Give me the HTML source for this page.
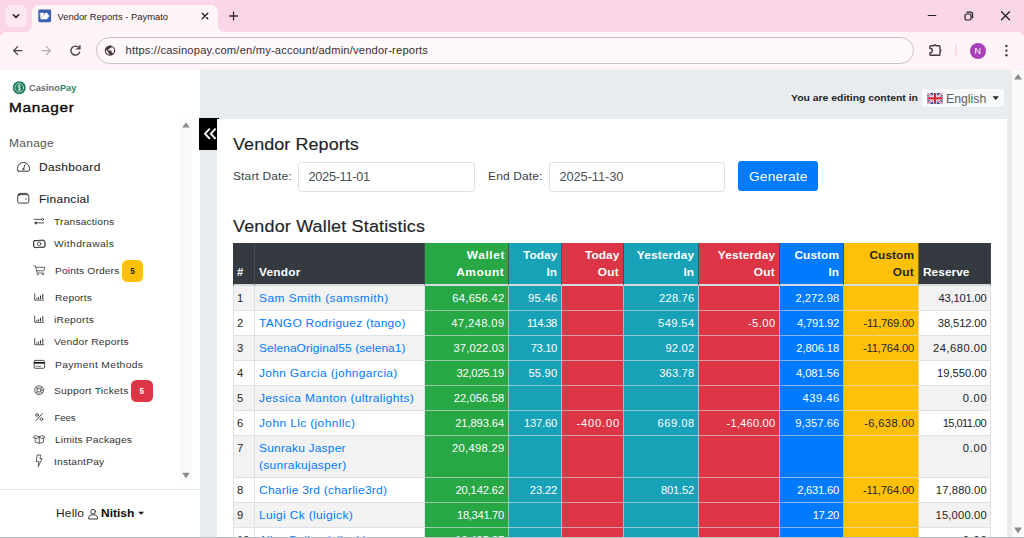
<!DOCTYPE html>
<html lang="en">
<head>
<meta charset="utf-8">
<title>Vendor Reports - Paymato</title>
<style>
*{box-sizing:border-box;margin:0;padding:0}
html,body{width:1024px;height:538px;overflow:hidden;background:#e9ecef;font-family:"Liberation Sans",sans-serif;color:#212529}
.t{position:absolute;white-space:nowrap;line-height:1}
/* browser chrome */
#chrome{position:absolute;left:0;top:0;width:1024px;height:70px;background:#fad7e8;z-index:5}
#tabstrip{position:absolute;left:0;top:0;width:1024px;height:32px;background:#fad7e8}
#toolbar{position:absolute;left:0;top:32px;width:1024px;height:38px;background:#fff5f7;border-radius:6px 6px 0 0;border-bottom:1px solid #fdeef2}
#tab{position:absolute;left:32px;top:5px;width:186px;height:28px;background:#fff5f7;border-radius:7px 7px 0 0}
#tabsearch{position:absolute;left:5px;top:5px;width:22px;height:22px;border-radius:6px;background:#fde7f0}
#tabtitle{position:absolute;left:57.5px;top:10.5px;font-size:9.4px;color:#2b2226;white-space:nowrap}
#omni{position:absolute;left:96px;top:37px;width:818px;height:26.5px;border-radius:13.5px;background:#fff8f9;border:1px solid #cdbfc4}
#url{position:absolute;left:125.5px;top:44px;font-size:11.2px;color:#3a2f33;white-space:nowrap;letter-spacing:.166px}
#avatar{position:absolute;left:969.7px;top:42.6px;width:16px;height:16px;border-radius:50%;background:#aa40b9;color:#fff;font-size:9px;line-height:16px;text-align:center}
/* page */
#page{position:absolute;left:0;top:0;width:1024px;height:538px;background:#e9ecef;overflow:hidden}
#sidebar{position:absolute;left:0;top:70px;width:200px;height:468px;background:#fff}
#sbtrack{position:absolute;left:179.6px;top:119px;width:12.2px;height:361.6px;background:#fafafa}
#sbsep{position:absolute;left:0;top:489px;width:200px;height:1px;background:#e3e3e3}
#toggle{position:absolute;left:199.2px;top:118px;width:19.6px;height:31.7px;background:#000}
#langbox{position:absolute;left:922px;top:89.2px;width:82.3px;height:17.9px;background:#f8f9fa;border-radius:3px}
#card{position:absolute;left:216.5px;top:119.2px;width:790.5px;height:430px;background:#fff}
.inp{position:absolute;top:161.5px;width:176.5px;height:30.3px;border:1px solid #dde1e6;border-radius:3.2px;background:#fff}
#genbtn{position:absolute;left:738px;top:161.4px;width:79.6px;height:29.9px;background:#007bff;border-radius:3.2px}
.badge{position:absolute;width:21.7px;height:22.4px;border-radius:5.5px}
#vscroll{position:absolute;left:1012px;top:70px;width:12px;height:468px;background:#fafafa}
#bottomline{position:absolute;left:0;top:537px;width:1024px;height:1px;background:#b9bcc0;z-index:6}
/* vendor table */
#vt{position:absolute;left:232.6px;top:242.7px;width:758.9px;border-collapse:separate;border-spacing:0;table-layout:fixed;font-size:11.2px;line-height:16.8px}
#vt th,#vt td{border:0 solid rgba(222,226,230,.6);border-right-width:1px;border-bottom-width:1px;padding:3.9px 3.8px 0 4.3px;vertical-align:top;text-align:right;white-space:nowrap;overflow:hidden;font-weight:400;color:#fff}
#vt th:first-child,#vt td:first-child{border-left-width:1px;padding-left:3.5px}
#vt th{height:43.2px;vertical-align:bottom;font-weight:700;padding:0 3.8px 2.9px 4.3px;border-bottom:2px solid #d4dce1;border-right-color:rgba(52,58,64,.6);border-left-color:#343a40}
#vt th:last-child{border-right-color:#343a40}
#vt tr{height:25px}
#vt .n,#vt .v{text-align:left;color:#212529}
#vt th.n,#vt th.v,#vt th.r{background:#343a40;color:#fff;border-right-color:#454d55}
#vt th.v,#vt th.r{text-align:left}
#vt td.v{white-space:normal}
#vt td.v a{color:#007bff}
#vt td.v span,#vt th span{display:inline-block;transform-origin:left center}
#vt th.c1 span,#vt th.c2 span,#vt th.c3 span,#vt th.c4 span,#vt th.c5 span{transform-origin:right center}
#vt .c1{background:#28a745}
#vt .c2{background:#17a2b8}
#vt .c3{background:#dc3545}
#vt .c4{background:#007bff}
#vt .c5{background:#ffc107;color:#212529}
#vt td.r{color:#212529}
#vt td.n,#vt td.v,#vt td.r{border-color:#dee2e6}
#vt tbody tr:nth-child(odd) td.n,#vt tbody tr:nth-child(odd) td.v,#vt tbody tr:nth-child(odd) td.r{background:#f2f2f2}
#vt tbody tr:first-child td{padding-top:4.3px}
</style>
</head>
<body>
<div id="chrome">
  <div id="tabstrip"></div>
  <div id="toolbar"></div>
  <div id="tabsearch"></div>
  <div id="tab"></div>
  <div id="tabtitle">Vendor Reports - Paymato</div>
  <div id="omni"></div>
  <div id="url">https://casinopay.com/en/my-account/admin/vendor-reports</div>
  <div id="avatar">N</div>
  <svg id="chromeicons" width="1024" height="70" viewBox="0 0 1024 70" style="position:absolute;left:0;top:0" fill="none" stroke-linecap="round" stroke-linejoin="round">
    <!-- tab outward curves -->
    <path d="M26 32 H32 V26 A6 6 0 0 1 26 32 Z" fill="#fff5f7" stroke="none"/>
    <path d="M224 32 H218 V26 A6 6 0 0 0 224 32 Z" fill="#fff5f7" stroke="none"/>
    <!-- tab search chevron -->
    <path d="M13.3 14.7 L16 17.4 L18.7 14.7" stroke="#1f1f1f" stroke-width="1.5"/>
    <!-- favicon -->
    <rect x="38.3" y="9.5" width="12.8" height="12.7" rx="1.4" fill="#3b5eb2" stroke="none"/>
    <path d="M40.5 13 H43.9 V14.9 L45.4 13 H46.9 L49.1 16 L46.9 19.1 H41 L40.4 17.2 Z" fill="#fff" stroke="#fff" stroke-width="0.5"/>
    <path d="M41.6 17.3 L44.6 14.6" stroke="#6f8bd0" stroke-width="0.6"/>
    <!-- tab close -->
    <path d="M202.2 13.2 L207.8 18.8 M207.8 13.2 L202.2 18.8" stroke="#1f1f1f" stroke-width="1.3"/>
    <!-- new tab plus -->
    <path d="M229.5 16 H237.5 M233.5 12 V20" stroke="#3a2c33" stroke-width="1.3"/>
    <!-- window controls -->
    <path d="M928.2 15.5 H935.8" stroke="#1f1f1f" stroke-width="1.2"/>
    <rect x="965" y="14" width="6" height="6" rx="1.4" stroke="#1f1f1f" stroke-width="1.2"/>
    <path d="M967 12.2 H970.6 A2 2 0 0 1 972.6 14.2 V17.8" stroke="#1f1f1f" stroke-width="1.2"/>
    <path d="M1001.5 11.8 L1009.5 19.8 M1009.5 11.8 L1001.5 19.8" stroke="#1f1f1f" stroke-width="1.3"/>
    <!-- back -->
    <path d="M21.9 50.6 H13.9 M17.6 46.6 L13.6 50.6 L17.6 54.6" stroke="#4a3a42" stroke-width="1.25"/>
    <!-- forward -->
    <path d="M42.1 50.6 H50.1 M46.4 46.6 L50.4 50.6 L46.4 54.6" stroke="#b5a9ae" stroke-width="1.25"/>
    <!-- reload -->
    <path d="M79.2 48.2 A4.5 4.5 0 1 0 79.6 52.2" stroke="#4a3a42" stroke-width="1.4"/>
    <path d="M79.9 45.6 V48.9 H76.6" stroke="#4a3a42" stroke-width="1.4"/>
    <!-- globe -->
    <path transform="translate(103.76 44.36) scale(0.52)" d="M12 2C6.48 2 2 6.48 2 12s4.48 10 10 10 10-4.48 10-10S17.52 2 12 2zm-1 17.93c-3.95-.49-7-3.85-7-7.93 0-.62.08-1.21.21-1.79L9 15v1c0 1.100.9 2 2 2v1.930zm6.900-2.540c-.26-.81-1-1.390-1.900-1.390h-1v-3c0-.55-.45-1-1-1H8v-2h2c.55 0 1-.45 1-1V7h2c1.100 0 2-.9 2-2v-.41c2.930 1.190 5 4.060 5 7.410 0 2.080-.8 3.970-2.100 5.390z" fill="#43343b" stroke="none"/>
    <!-- extensions puzzle -->
    <path d="M930.7 45.7 H934 A0.95 0.95 0 0 1 935.9 45.7 H939.1 A0.8 0.8 0 0 1 939.9 46.5 V49.6 A0.95 0.95 0 0 1 939.9 51.5 V54.4 A0.8 0.8 0 0 1 939.1 55.2 H930.7 A0.8 0.8 0 0 1 929.9 54.4 V53 A2.4 2.4 0 0 0 929.9 48.2 V46.5 A0.8 0.8 0 0 1 930.7 45.7 Z" stroke="#4a3540" stroke-width="1.4"/>
    <!-- separator -->
    <path d="M955.9 44.8 V56.2" stroke="#fbd0e4" stroke-width="1.5" stroke-linecap="butt"/>
    <!-- menu dots -->
    <circle cx="1006.4" cy="46" r="1.2" fill="#4a3540" stroke="none"/>
    <circle cx="1006.4" cy="50.6" r="1.2" fill="#4a3540" stroke="none"/>
    <circle cx="1006.4" cy="55.2" r="1.2" fill="#4a3540" stroke="none"/>
  </svg>
</div>

<div id="page">
  <div id="sidebar"></div>
  <div id="sbtrack"></div>
  <div id="sbsep"></div>
  <div id="toggle"></div>
  <div id="langbox"></div>
  <div id="card"></div>
  <div class="inp" style="left:298.3px"></div>
  <div class="inp" style="left:548.9px"></div>
  <div id="genbtn"></div>
  <div class="badge" style="left:121.5px;top:259.8px;background:#ffc107"></div>
  <div class="badge" style="left:131px;top:380.1px;background:#dc3545"></div>
  <table id="vt">
    <colgroup><col style="width:22.4px"><col style="width:170px"><col style="width:84px"><col style="width:53px"><col style="width:62px"><col style="width:75px"><col style="width:81px"><col style="width:64px"><col style="width:75px"><col style="width:72.5px"></colgroup>
    <thead><tr>
      <th class="n">#</th>
      <th class="v"><span style="letter-spacing:0.23px;transform:scaleX(1.0600)">Vendor</span></th>
      <th class="c1"><span style="letter-spacing:0.57px;margin-right:-0.57px;transform:scaleX(1.0600)">Wallet</span><br><span style="letter-spacing:0.49px;margin-right:-0.49px;transform:scaleX(1.0600)">Amount</span></th>
      <th class="c2"><span style="letter-spacing:0.06px;margin-right:-0.06px;transform:scaleX(1.0600)">Today</span><br><span style="letter-spacing:0.02px;margin-right:-0.02px;transform:scaleX(1.0528)">In</span></th>
      <th class="c3"><span style="letter-spacing:0.06px;margin-right:-0.06px;transform:scaleX(1.0600)">Today</span><br><span style="letter-spacing:0.27px;margin-right:-0.27px;transform:scaleX(1.0600)">Out</span></th>
      <th class="c2"><span style="letter-spacing:0.16px;margin-right:-0.16px;transform:scaleX(1.0600)">Yesterday</span><br><span style="letter-spacing:0.02px;margin-right:-0.02px;transform:scaleX(1.0528)">In</span></th>
      <th class="c3"><span style="letter-spacing:0.16px;margin-right:-0.16px;transform:scaleX(1.0600)">Yesterday</span><br><span style="letter-spacing:0.27px;margin-right:-0.27px;transform:scaleX(1.0600)">Out</span></th>
      <th class="c4"><span style="letter-spacing:0.06px;margin-right:-0.06px;transform:scaleX(1.0600)">Custom</span><br><span style="letter-spacing:0.02px;margin-right:-0.02px;transform:scaleX(1.0528)">In</span></th>
      <th class="c5"><span style="letter-spacing:0.06px;margin-right:-0.06px;transform:scaleX(1.0600)">Custom</span><br><span style="letter-spacing:0.27px;margin-right:-0.27px;transform:scaleX(1.0600)">Out</span></th>
      <th class="r"><span style="letter-spacing:0.04px;transform:scaleX(1.0600)">Reserve</span></th>
    </tr></thead>
    <tbody>
      <tr style="height:25.1px"><td class="n">1</td><td class="v"><a><span style="letter-spacing:0.400px;transform:scaleX(1.0700)">Sam Smith (samsmith)</span></a></td><td class="c1" style="letter-spacing:0.27px;padding-right:3.53px">64,656.42</td><td class="c2" style="letter-spacing:0.32px;padding-right:3.48px">95.46</td><td class="c3"></td><td class="c2" style="letter-spacing:0.17px;padding-right:3.63px">228.76</td><td class="c3"></td><td class="c4" style="letter-spacing:0.02px;padding-right:3.78px">2,272.98</td><td class="c5"></td><td class="r" style="letter-spacing:-0.21px;padding-right:4.01px">43,101.00</td></tr>
      <tr><td class="n">2</td><td class="v"><a><span style="letter-spacing:0.237px;transform:scaleX(1.0700)">TANGO Rodriguez (tango)</span></a></td><td class="c1" style="letter-spacing:0.40px;padding-right:3.40px">47,248.09</td><td class="c2" style="letter-spacing:-0.64px;padding-right:4.44px">114.38</td><td class="c3"></td><td class="c2" style="letter-spacing:0.38px;padding-right:3.42px">549.54</td><td class="c3" style="letter-spacing:0.44px;padding-right:3.36px">-5.00</td><td class="c4" style="letter-spacing:-0.18px;padding-right:3.98px">4,791.92</td><td class="c5" style="letter-spacing:-0.23px;padding-right:4.03px">-11,769.00</td><td class="r" style="letter-spacing:-0.11px;padding-right:3.91px">38,512.00</td></tr>
      <tr><td class="n">3</td><td class="v"><a><span style="letter-spacing:0.054px;transform:scaleX(1.0700)">SelenaOriginal55 (selena1)</span></a></td><td class="c1" style="letter-spacing:0.11px;padding-right:3.69px">37,022.03</td><td class="c2" style="letter-spacing:-0.40px;padding-right:4.20px">73.10</td><td class="c3"></td><td class="c2" style="letter-spacing:0.19px;padding-right:3.61px">92.02</td><td class="c3"></td><td class="c4" style="letter-spacing:-0.09px;padding-right:3.89px">2,806.18</td><td class="c5" style="letter-spacing:-0.16px;padding-right:3.96px">-11,764.00</td><td class="r" style="letter-spacing:0.48px;padding-right:3.32px">24,680.00</td></tr>
      <tr><td class="n">4</td><td class="v"><a><span style="letter-spacing:0.294px;transform:scaleX(1.0700)">John Garcia (johngarcia)</span></a></td><td class="c1" style="letter-spacing:-0.26px;padding-right:4.06px">32,025.19</td><td class="c2" style="letter-spacing:0.19px;padding-right:3.61px">55.90</td><td class="c3"></td><td class="c2" style="letter-spacing:0.16px;padding-right:3.64px">363.78</td><td class="c3"></td><td class="c4" style="letter-spacing:-0.04px;padding-right:3.84px">4,081.56</td><td class="c5"></td><td class="r" style="letter-spacing:-0.02px;padding-right:3.82px">19,550.00</td></tr>
      <tr><td class="n">5</td><td class="v"><a><span style="letter-spacing:0.311px;transform:scaleX(1.0700)">Jessica Manton (ultralights)</span></a></td><td class="c1" style="letter-spacing:0.10px;padding-right:3.70px">22,056.58</td><td class="c2"></td><td class="c3"></td><td class="c2"></td><td class="c3"></td><td class="c4" style="letter-spacing:0.47px;padding-right:3.33px">439.46</td><td class="c5"></td><td class="r" style="letter-spacing:0.74px;padding-right:3.06px">0.00</td></tr>
      <tr><td class="n">6</td><td class="v"><a><span style="letter-spacing:0.345px;transform:scaleX(1.0700)">John Llc (johnllc)</span></a></td><td class="c1" style="letter-spacing:-0.10px;padding-right:3.90px">21,893.64</td><td class="c2" style="letter-spacing:-0.22px;padding-right:4.02px">137.60</td><td class="c3" style="letter-spacing:0.80px;padding-right:3.00px">-400.00</td><td class="c2" style="letter-spacing:0.48px;padding-right:3.32px">669.08</td><td class="c3" style="letter-spacing:0.17px;padding-right:3.63px">-1,460.00</td><td class="c4" style="letter-spacing:0.04px;padding-right:3.76px">9,357.66</td><td class="c5" style="letter-spacing:0.34px;padding-right:3.46px">-6,638.00</td><td class="r" style="letter-spacing:-0.62px;padding-right:4.42px">15,011.00</td></tr>
      <tr style="height:42px"><td class="n">7</td><td class="v"><a><span style="letter-spacing:0.191px;transform:scaleX(1.0700)">Sunraku Jasper</span><br><span style="letter-spacing:0.275px;transform:scaleX(1.0700)">(sunrakujasper)</span></a></td><td class="c1" style="letter-spacing:0.29px;padding-right:3.51px">20,498.29</td><td class="c2"></td><td class="c3"></td><td class="c2"></td><td class="c3"></td><td class="c4"></td><td class="c5"></td><td class="r" style="letter-spacing:0.74px;padding-right:3.06px">0.00</td></tr>
      <tr><td class="n">8</td><td class="v"><a><span style="letter-spacing:0.223px;transform:scaleX(1.0700)">Charlie 3rd (charlie3rd)</span></a></td><td class="c1" style="letter-spacing:-0.13px;padding-right:3.93px">20,142.62</td><td class="c2" style="letter-spacing:-0.16px;padding-right:3.96px">23.22</td><td class="c3"></td><td class="c2" style="letter-spacing:-0.22px;padding-right:4.02px">801.52</td><td class="c3"></td><td class="c4" style="letter-spacing:-0.23px;padding-right:4.03px">2,631.60</td><td class="c5" style="letter-spacing:-0.16px;padding-right:3.96px">-11,764.00</td><td class="r" style="letter-spacing:0.14px;padding-right:3.66px">17,880.00</td></tr>
      <tr><td class="n">9</td><td class="v"><a><span style="letter-spacing:0.326px;transform:scaleX(1.0700)">Luigi Ck (luigick)</span></a></td><td class="c1" style="letter-spacing:-0.33px;padding-right:4.13px">18,341.70</td><td class="c2"></td><td class="c3"></td><td class="c2"></td><td class="c3"></td><td class="c4" style="letter-spacing:-0.39px;padding-right:4.19px">17.20</td><td class="c5"></td><td class="r" style="letter-spacing:0.17px;padding-right:3.63px">15,000.00</td></tr>
      <tr><td class="n">10</td><td class="v"><a><span style="letter-spacing:0.165px;transform:scaleX(1.0700)">Alice Bailey (aliceb)</span></a></td><td class="c1" style="letter-spacing:-0.07px;padding-right:3.87px">16,495.87</td><td class="c2"></td><td class="c3"></td><td class="c2"></td><td class="c3"></td><td class="c4"></td><td class="c5"></td><td class="r" style="letter-spacing:0.74px;padding-right:3.06px">0.00</td></tr>
    </tbody>
  </table>

  <div id="vscroll"></div>
  <svg id="icons" width="1024" height="538" viewBox="0 0 1024 538" style="position:absolute;left:0;top:0" fill="none" stroke="#333" stroke-width="0.9" stroke-linecap="round" stroke-linejoin="round">
    <!-- logo -->
    <circle cx="19.25" cy="87.7" r="6.55" fill="#1e7e5b" stroke="none"/>
    <circle cx="19.25" cy="87.7" r="4.35" stroke="#fff" stroke-width="0.6"/>
    <path d="M20.6 86.2 C20.2 85.2 18 85.2 18 86.5 C18 87.8 20.6 87.5 20.6 88.9 C20.6 90.2 18.3 90.2 17.9 89.2 M19.25 84.6 V90.8" stroke="#fff" stroke-width="0.7"/>
    <!-- sidebar scroll arrows -->
    <path d="M182.2 127.6 L186 122.3 L189.8 127.6 Z" fill="#8b8b8b" stroke="none"/>
    <path d="M182.2 472.7 L189.8 472.7 L186 478.2 Z" fill="#8b8b8b" stroke="none"/>
    <!-- dashboard -->
    <path d="M18.7 171.2 H28.2 A1.3 1.3 0 0 0 29.5 169.9 V168.6 A6.05 6.2 0 0 0 17.4 168.6 V169.9 A1.3 1.3 0 0 0 18.7 171.2 Z" stroke-width="0.95"/>
    <path d="M23.6 168.6 L25.1 164.6" stroke-width="0.9"/>
    <circle cx="23.3" cy="169.2" r="0.8" stroke-width="0.7"/>
    <!-- wallet -->
    <rect x="17.7" y="194.7" width="11.1" height="8.4" rx="1.7" stroke-width="0.95"/>
    <path d="M18.1 195.6 A1.9 1.9 0 0 1 19.9 193.4 H26.6 A1.5 1.5 0 0 1 28.1 194.7" stroke-width="0.95"/>
    <circle cx="25.9" cy="199" r="0.65" fill="#333" stroke="none"/>
    <!-- transactions -->
    <path d="M34.3 219.4 H41.4 M36.4 222.9 H43.8" stroke-width="0.85"/>
    <circle cx="42.6" cy="219.4" r="1.05" stroke-width="0.75"/>
    <path d="M34 222.9 L36.6 221 V224.8 Z" fill="#333" stroke="none"/>
    <!-- withdrawals -->
    <rect x="33.6" y="240.6" width="11.4" height="6.8" rx="0.9" stroke-width="0.85"/>
    <rect x="33.9" y="240.3" width="11" height="7" rx="1.6" transform="rotate(-7 39.3 243.8)" stroke-width="0.6"/>
    <circle cx="39.1" cy="243.8" r="1.75" stroke-width="0.8"/>
    <!-- cart -->
    <path d="M33.9 265.7 L35.5 266.1 L37.2 273.1 H43.9 M36 267.3 H44.8 L43.8 270.8 H36.9" stroke-width="0.75"/>
    <circle cx="37.9" cy="274.4" r="0.75" fill="#333" stroke="none"/>
    <circle cx="42.8" cy="274.4" r="0.75" fill="#333" stroke="none"/>
    <!-- charts x3 -->
    <g stroke-width="0.85" transform="translate(0 0)">
      <path d="M34.7 293.9 V300.1 H43.8"/>
      <path d="M36.9 298.2 V298.7 M38.6 297.4 V298.7 M40.5 296 V298.7 M42.8 294.4 V298.7" stroke-width="1"/>
    </g>
    <g stroke-width="0.85" transform="translate(0 22.2)">
      <path d="M34.7 293.9 V300.1 H43.8"/>
      <path d="M36.9 298.2 V298.7 M38.6 297.4 V298.7 M40.5 296 V298.7 M42.8 294.4 V298.7" stroke-width="1"/>
    </g>
    <g stroke-width="0.85" transform="translate(0 44.6)">
      <path d="M34.7 293.9 V300.1 H43.8"/>
      <path d="M36.9 298.2 V298.7 M38.6 297.4 V298.7 M40.5 296 V298.7 M42.8 294.4 V298.7" stroke-width="1"/>
    </g>
    <!-- card -->
    <rect x="34.1" y="360.4" width="10.5" height="7.9" rx="1.1" stroke-width="0.85"/>
    <path d="M34.1 362.8 H44.6" stroke="#111" stroke-width="1.7" stroke-linecap="butt"/>
    <path d="M36 366.3 H36.7 M37.8 366.3 H40.6" stroke-width="0.8"/>
    <!-- lifebuoy -->
    <circle cx="39.1" cy="390.2" r="4.45" stroke-width="0.7"/>
    <circle cx="39.1" cy="390.2" r="3.3" stroke-width="0.35"/>
    <circle cx="39.1" cy="390.2" r="1.9" stroke-width="0.7"/>
    <path d="M37.7 388.8 L36 387.1 M40.5 388.8 L42.2 387.1 M37.7 391.6 L36 393.3 M40.5 391.6 L42.2 393.3" stroke-width="0.6"/>
    <!-- percent -->
    <path d="M42.3 413.6 L36.1 420.6" stroke-width="0.9"/>
    <circle cx="37" cy="415" r="1.35" stroke-width="0.8"/>
    <circle cx="41.5" cy="419.2" r="1.35" stroke-width="0.8"/>
    <!-- box -->
    <path d="M35.2 438.2 V442.2 L39.3 443.3 L43.5 442.2 V438.2 M39.3 436.6 V443.3 M35.2 435.6 L39.3 436.6 L43.5 435.6 L45.2 437.6 L41.2 438.7 L39.3 436.6 L37.4 438.7 L33.5 437.6 Z" stroke-width="0.75"/>
    <!-- lightning -->
    <path d="M37.6 455 H40.6 L40 458.6 H42.1 L38.2 466.6 L38.9 461.6 H36.7 Z" stroke-width="0.8"/>
    <!-- user -->
    <circle cx="93.1" cy="511.7" r="2.35" stroke-width="0.9" stroke="#222"/>
    <path d="M88.7 518.6 V517.6 C88.7 515.4 90.8 514.8 93.1 514.8 C95.4 514.8 97.5 515.4 97.5 517.6 V518.6 Z" stroke-width="0.9" stroke="#222"/>
    <!-- carets -->
    <path d="M138.2 511.7 H144 L141.1 514.8 Z" fill="#111" stroke="none"/>
    <path d="M992.5 96.3 H999 L995.75 100 Z" fill="#2b2b2b" stroke="none"/>
    <!-- toggle chevrons -->
    <path d="M209.8 128.6 L205 133.7 L209.8 138.8 M215.6 128.6 L210.8 133.7 L215.6 138.8" stroke="#fff" stroke-width="1.95" stroke-linecap="butt" stroke-linejoin="miter"/>
    <!-- flag -->
    <g id="flag">
      <rect x="927.4" y="93" width="15.2" height="10.8" fill="#1f3f8f" stroke="none"/>
      <path d="M927.4 93 L942.6 103.8 M942.6 93 L927.4 103.8" stroke="#fff" stroke-width="2.2" stroke-linecap="butt"/>
      <path d="M927.4 93 L942.6 103.8 M942.6 93 L927.4 103.8" stroke="#d8203a" stroke-width="0.8" stroke-linecap="butt"/>
      <path d="M935 93 V103.8 M927.4 98.4 H942.6" stroke="#fff" stroke-width="3.6" stroke-linecap="butt"/>
      <path d="M935 93 V103.8 M927.4 98.4 H942.6" stroke="#d8203a" stroke-width="2.1" stroke-linecap="butt"/>
    </g>
    <!-- page scrollbar arrows -->
    <path d="M1014 79.6 L1018 73.9 L1022 79.6 Z" fill="#8b8b8b" stroke="none"/>
    <path d="M1014 527.6 L1022 527.6 L1018 533.2 Z" fill="#8b8b8b" stroke="none"/>
  </svg>

  <div class="t" style="top:83.55px;font-size:8.8px;left:28.60px;font-weight:700;color:#6b6b6b;transform:scaleX(1.0537);transform-origin:left;">Casino<span style="color:#2d8a64">Pay</span></div>
  <div class="t" style="top:101.29px;font-size:13.6px;left:8.80px;letter-spacing:0.615px;color:#0a0a0a;-webkit-text-stroke:0.38px;transform:scaleX(1.1300);transform-origin:left;">Manager</div>
  <div class="t" style="top:137.62px;font-size:11.2px;left:8.80px;letter-spacing:0.268px;color:#555;transform:scaleX(1.0700);transform-origin:left;">Manage</div>
  <div class="t" style="top:162.22px;font-size:11.2px;left:38.80px;letter-spacing:0.319px;color:#1f1f1f;-webkit-text-stroke:0.12px;transform:scaleX(1.0700);transform-origin:left;">Dashboard</div>
  <div class="t" style="top:193.92px;font-size:11.2px;left:38.80px;letter-spacing:0.267px;color:#1f1f1f;-webkit-text-stroke:0.12px;transform:scaleX(1.0700);transform-origin:left;">Financial</div>
  <div class="t" style="top:216.77px;font-size:9.6px;left:53.90px;letter-spacing:0.153px;color:#333;transform:scaleX(1.0700);transform-origin:left;">Transactions</div>
  <div class="t" style="top:239.07px;font-size:9.6px;left:53.90px;letter-spacing:0.373px;color:#333;transform:scaleX(1.0700);transform-origin:left;">Withdrawals</div>
  <div class="t" style="top:265.77px;font-size:9.6px;left:54.50px;letter-spacing:0.120px;color:#333;transform:scaleX(1.0700);transform-origin:left;">Points Orders</div>
  <div class="t" style="top:292.77px;font-size:9.6px;left:54.50px;letter-spacing:0.133px;color:#333;transform:scaleX(1.0700);transform-origin:left;">Reports</div>
  <div class="t" style="top:314.87px;font-size:9.6px;left:54.10px;letter-spacing:0.222px;color:#333;transform:scaleX(1.0700);transform-origin:left;">iReports</div>
  <div class="t" style="top:337.37px;font-size:9.6px;left:54.10px;letter-spacing:0.242px;color:#333;transform:scaleX(1.0700);transform-origin:left;">Vendor Reports</div>
  <div class="t" style="top:359.67px;font-size:9.6px;left:54.50px;letter-spacing:0.351px;color:#333;transform:scaleX(1.0700);transform-origin:left;">Payment Methods</div>
  <div class="t" style="top:385.67px;font-size:9.6px;left:54.10px;letter-spacing:0.237px;color:#333;transform:scaleX(1.0700);transform-origin:left;">Support Tickets</div>
  <div class="t" style="top:412.67px;font-size:9.6px;left:54.50px;letter-spacing:-0.115px;color:#333;">Fees</div>
  <div class="t" style="top:434.87px;font-size:9.6px;left:54.50px;letter-spacing:0.150px;color:#333;transform:scaleX(1.0700);transform-origin:left;">Limits Packages</div>
  <div class="t" style="top:457.17px;font-size:9.6px;left:54.40px;letter-spacing:0.175px;color:#333;transform:scaleX(1.0700);transform-origin:left;">InstantPay</div>
  <div class="t" style="top:267.66px;font-size:8.2px;left:130.20px;font-weight:700;">5</div>
  <div class="t" style="top:387.96px;font-size:8.2px;left:139.40px;font-weight:700;color:#fff;">5</div>
  <div class="t" style="top:508.32px;font-size:11.2px;left:56.40px;letter-spacing:0.167px;color:#1f1f1f;transform:scaleX(1.0700);transform-origin:left;">Hello</div>
  <div class="t" style="top:508.32px;font-size:11.2px;left:101.30px;letter-spacing:0.009px;font-weight:700;color:#0a0a0a;transform:scaleX(1.0700);transform-origin:left;">Nitish</div>
  <div class="t" style="top:92.50px;font-size:9.8px;left:791.30px;font-weight:700;transform:scaleX(1.0614);transform-origin:left;">You are editing content in</div>
  <div class="t" style="top:92.54px;font-size:12px;left:946.00px;color:#5e5e5e;transform:scaleX(1.0214);transform-origin:left;">English</div>
  <div class="t" style="top:136.98px;font-size:16.8px;left:233.00px;letter-spacing:0.074px;-webkit-text-stroke:0.15px;transform:scaleX(1.0700);transform-origin:left;">Vendor Reports</div>
  <div class="t" style="top:219.48px;font-size:16.8px;left:233.00px;letter-spacing:0.164px;-webkit-text-stroke:0.15px;transform:scaleX(1.0700);transform-origin:left;">Vendor Wallet Statistics</div>
  <div class="t" style="top:171.22px;font-size:11.2px;left:233.00px;letter-spacing:0.128px;color:#3a3f44;transform:scaleX(1.0700);transform-origin:left;">Start Date:</div>
  <div class="t" style="top:171.22px;font-size:11.2px;left:488.10px;letter-spacing:0.134px;color:#3a3f44;transform:scaleX(1.0700);transform-origin:left;">End Date:</div>
  <div class="t" style="top:170.76px;font-size:12.8px;left:308.50px;letter-spacing:-0.324px;color:#495057;">2025-11-01</div>
  <div class="t" style="top:170.76px;font-size:12.8px;left:559.40px;letter-spacing:-0.057px;color:#495057;">2025-11-30</div>
  <div class="t" style="top:170.56px;font-size:12.8px;left:748.80px;letter-spacing:0.174px;color:#fff;transform:scaleX(1.0700);transform-origin:left;">Generate</div>
</div>
<div id="bottomline"></div>
</body>
</html>
